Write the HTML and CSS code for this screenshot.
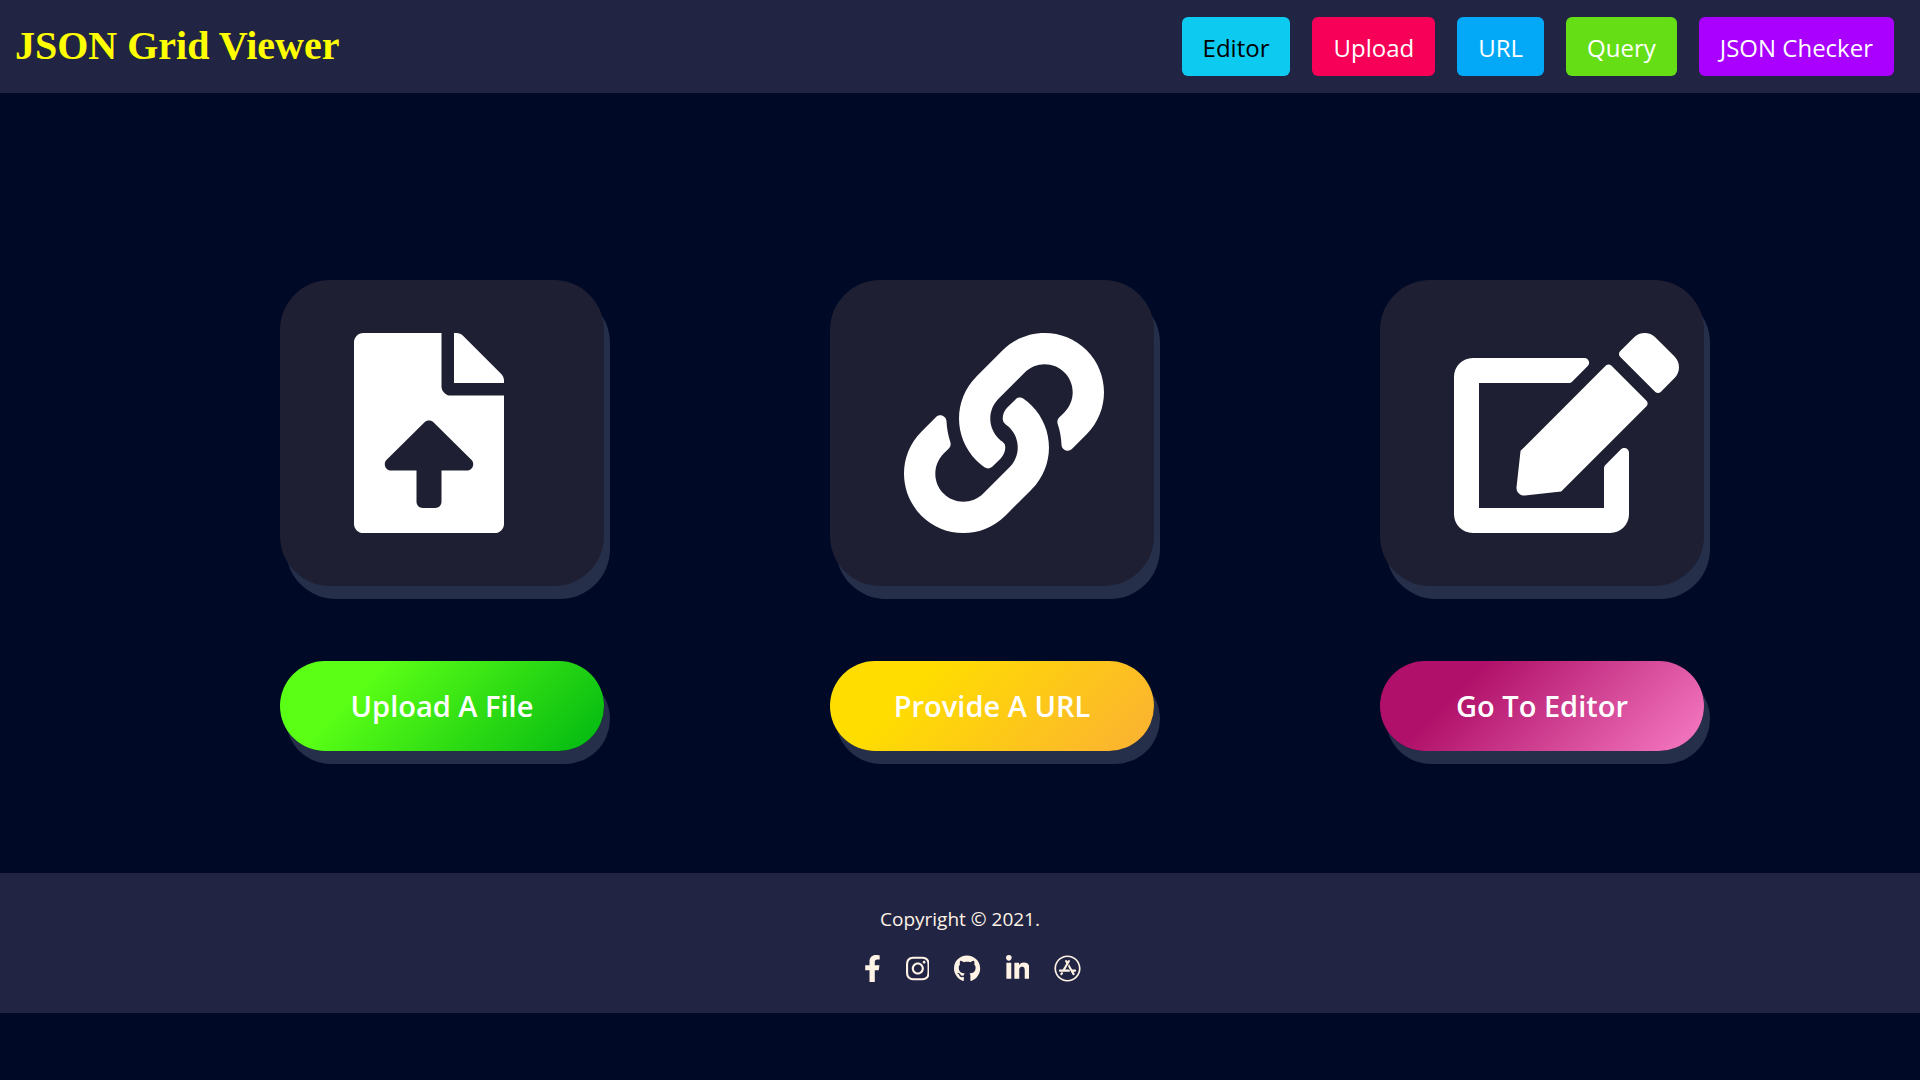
FILE: index.html
```html
<!DOCTYPE html>
<html lang="en">
<head>
  <meta charset="utf-8">
  <meta name="viewport" content="width=device-width, initial-scale=1">
  <title>JSON Grid Viewer</title>
  <link rel="stylesheet" href="styles.css">
</head>
<body>
  <header class="navbar">
    <h1 class="brand">JSON Grid Viewer</h1>
    <nav class="nav-buttons">
      <button class="nav-btn nav-editor" type="button">Editor</button>
      <button class="nav-btn nav-upload" type="button">Upload</button>
      <button class="nav-btn nav-url" type="button">URL</button>
      <button class="nav-btn nav-query" type="button">Query</button>
      <button class="nav-btn nav-checker" type="button">JSON Checker</button>
    </nav>
  </header>

  <main class="options">
    <section class="option">
      <div class="tile">
        <svg class="tile-icon" viewBox="0 0 384 512" aria-hidden="true"><path d="M224 136V0H24C10.7 0 0 10.7 0 24v464c0 13.3 10.7 24 24 24h336c13.3 0 24-10.7 24-24V160H248c-13.2 0-24-10.8-24-24zm65.18 216.01H224v80c0 8.84-7.16 16-16 16h-32c-8.84 0-16-7.16-16-16v-80H94.82c-14.28 0-21.41-17.29-11.27-27.36l96.42-95.7c6.65-6.61 17.39-6.61 24.04 0l96.42 95.7c10.15 10.07 3.03 27.36-11.25 27.36zM377 105L279.1 7c-4.5-4.5-10.6-7-17-7H256v128h128v-6.1c0-6.3-2.5-12.4-7-16.9z"/></svg>
      </div>
      <button class="action action-upload" type="button">Upload A File</button>
    </section>
    <section class="option">
      <div class="tile">
        <svg class="tile-icon" viewBox="0 0 512 512" aria-hidden="true"><path d="M326.612 185.391c59.747 59.809 58.927 155.698.36 214.59-.11.12-.24.25-.36.37l-67.2 67.2c-59.27 59.27-155.699 59.262-214.96 0-59.27-59.26-59.27-155.7 0-214.96l37.106-37.106c9.84-9.84 26.786-3.3 27.294 10.606.648 17.722 3.826 35.527 9.69 52.721 1.986 5.822.567 12.262-3.783 16.612l-13.087 13.087c-28.026 28.026-28.905 73.66-1.155 101.96 28.024 28.579 74.086 28.749 102.325.51l67.2-67.19c28.191-28.191 28.073-73.757 0-101.83-3.701-3.694-7.429-6.564-10.341-8.569a16.037 16.037 0 0 1-6.947-12.606c-.396-10.567 3.348-21.456 11.698-29.806l21.054-21.055c5.521-5.521 14.182-6.199 20.584-1.731a152.482 152.482 0 0 1 20.522 17.197zM467.547 44.449c-59.261-59.262-155.69-59.27-214.96 0l-67.2 67.2c-.12.12-.25.25-.36.37-58.566 58.892-59.387 154.781.36 214.59a152.454 152.454 0 0 0 20.521 17.196c6.402 4.468 15.064 3.789 20.584-1.731l21.054-21.055c8.35-8.35 12.094-19.239 11.698-29.806a16.037 16.037 0 0 0-6.947-12.606c-2.912-2.005-6.64-4.875-10.341-8.569-28.073-28.073-28.191-73.639 0-101.83l67.2-67.19c28.239-28.239 74.3-28.069 102.325.51 27.75 28.3 26.872 73.934-1.155 101.96l-13.087 13.087c-4.35 4.35-5.769 10.79-3.783 16.612 5.864 17.194 9.042 34.999 9.69 52.721.509 13.906 17.454 20.446 27.294 10.606l37.106-37.106c59.271-59.259 59.271-155.699.001-214.959z"/></svg>
      </div>
      <button class="action action-url" type="button">Provide A URL</button>
    </section>
    <section class="option">
      <div class="tile">
        <svg class="tile-icon" viewBox="0 0 576 512" aria-hidden="true"><path d="M402.6 83.2l90.2 90.2c3.8 3.8 3.8 10 0 13.8L274.4 405.6l-92.8 10.3c-12.4 1.4-22.9-9.1-21.5-21.5l10.3-92.8L388.8 83.2c3.8-3.8 10-3.8 13.8 0zm162-22.9l-48.8-48.8c-15.2-15.2-39.9-15.2-55.2 0l-35.4 35.4c-3.8 3.8-3.8 10 0 13.8l90.2 90.2c3.8 3.8 10 3.8 13.8 0l35.4-35.4c15.2-15.3 15.2-40 0-55.2zM384 346.2V448H64V128h229.8c3.2 0 6.2-1.3 8.5-3.5l40-40c7.6-7.6 2.2-20.5-8.5-20.5H48C21.5 64 0 85.5 0 112v352c0 26.5 21.5 48 48 48h352c26.5 0 48-21.5 48-48V306.2c0-10.7-12.9-16-20.5-8.5l-40 40c-2.2 2.3-3.5 5.3-3.5 8.5z"/></svg>
      </div>
      <button class="action action-editor" type="button">Go To Editor</button>
    </section>
  </main>

  <footer class="footer">
    <p class="copyright">Copyright © 2021.</p>
    <div class="social">
      <a href="#" aria-label="Facebook"><svg class="social-icon" viewBox="0 0 320 512"><path d="M279.14 288l14.22-92.66h-88.91v-60.13c0-25.35 12.42-50.06 52.24-50.06h40.42V6.26S260.43 0 225.36 0c-73.22 0-121.08 44.38-121.08 124.72v70.62H22.89V288h81.39v224h100.17V288z"/></svg></a>
      <a href="#" aria-label="Instagram"><svg class="social-icon" viewBox="0 0 448 512"><path d="M224.1 141c-63.6 0-114.9 51.3-114.9 114.9s51.3 114.9 114.9 114.9S339 319.5 339 255.9 287.7 141 224.1 141zm0 189.6c-41.1 0-74.7-33.5-74.7-74.7s33.5-74.7 74.7-74.7 74.7 33.5 74.7 74.7-33.6 74.7-74.7 74.7zm146.4-194.3c0 14.9-12 26.8-26.8 26.8-14.9 0-26.8-12-26.8-26.8s12-26.8 26.8-26.8 26.8 12 26.8 26.8zm76.1 27.2c-1.7-35.9-9.9-67.7-36.2-93.9-26.2-26.2-58-34.4-93.9-36.2-37-2.1-147.9-2.1-184.9 0-35.8 1.7-67.6 9.9-93.9 36.1s-34.4 58-36.2 93.9c-2.1 37-2.1 147.9 0 184.9 1.7 35.9 9.9 67.7 36.2 93.9s58 34.4 93.9 36.2c37 2.1 147.9 2.1 184.9 0 35.9-1.7 67.7-9.9 93.9-36.2 26.2-26.2 34.4-58 36.2-93.9 2.1-37 2.1-147.8 0-184.8zM398.8 388c-7.8 19.6-22.9 34.7-42.6 42.6-29.5 11.7-99.5 9-132.1 9s-102.7 2.6-132.1-9c-19.6-7.8-34.7-22.9-42.6-42.6-11.7-29.5-9-99.5-9-132.1s-2.6-102.7 9-132.1c7.8-19.6 22.9-34.7 42.6-42.6 29.5-11.7 99.5-9 132.1-9s102.7-2.6 132.1 9c19.6 7.8 34.7 22.9 42.6 42.6 11.7 29.5 9 99.5 9 132.1s2.7 102.7-9 132.1z"/></svg></a>
      <a href="#" aria-label="GitHub"><svg class="social-icon" viewBox="0 0 496 512"><path d="M165.9 397.4c0 2-2.3 3.6-5.2 3.6-3.3.3-5.6-1.3-5.6-3.6 0-2 2.3-3.6 5.2-3.6 3-.3 5.6 1.3 5.6 3.6zm-31.1-4.5c-.7 2 1.3 4.3 4.3 4.9 2.6 1 5.6 0 6.2-2s-1.3-4.3-4.3-5.2c-2.6-.7-5.5.3-6.2 2.3zm44.2-1.7c-2.9.7-4.9 2.6-4.6 4.9.3 2 2.9 3.3 5.9 2.6 2.9-.7 4.9-2.6 4.6-4.6-.3-1.9-3-3.2-5.9-2.9zM244.8 8C106.1 8 0 113.3 0 252c0 110.9 69.8 205.8 169.5 239.2 12.8 2.3 17.3-5.6 17.3-12.1 0-6.2-.3-40.4-.3-61.4 0 0-70 15-84.7-29.8 0 0-11.4-29.1-27.8-36.6 0 0-22.9-15.7 1.6-15.4 0 0 24.9 2 38.6 25.8 21.9 38.6 58.6 27.5 72.9 20.9 2.3-16 8.8-27.1 16-33.7-55.9-6.2-112.3-14.3-112.3-110.5 0-27.5 7.6-41.3 23.6-58.9-2.6-6.5-11.1-33.3 2.6-67.9 20.9-6.5 69 27 69 27 20-5.6 41.5-8.5 62.8-8.5s42.8 2.9 62.8 8.5c0 0 48.1-33.6 69-27 13.7 34.7 5.2 61.4 2.6 67.9 16 17.7 25.8 31.5 25.8 58.9 0 96.5-58.9 104.2-114.8 110.5 9.2 7.9 17 22.9 17 46.4 0 33.7-.3 75.4-.3 83.6 0 6.5 4.6 14.4 17.3 12.1C428.2 457.8 496 362.9 496 252 496 113.3 383.5 8 244.8 8z"/></svg></a>
      <a href="#" aria-label="LinkedIn"><svg class="social-icon" viewBox="0 0 448 512"><path d="M100.28 448H7.4V148.9h92.88zM53.79 108.1C24.09 108.1 0 83.5 0 53.8a53.79 53.79 0 0 1 107.58 0c0 29.7-24.1 54.3-53.79 54.3zM447.9 448h-92.68V302.4c0-34.7-.7-79.2-48.29-79.2-48.29 0-55.69 37.7-55.69 76.7V448h-92.78V148.9h89.08v40.8h1.3c12.4-23.5 42.69-48.3 87.88-48.3 94 0 111.28 61.9 111.28 142.3V448z"/></svg></a>
      <a href="#" aria-label="App Store"><svg class="social-icon" viewBox="0 0 512 512"><path d="M255.9 120.9l9.1-15.7c5.6-9.8 18.1-13.1 27.9-7.5 9.8 5.6 13.1 18.1 7.5 27.9l-87.5 151.5h63.3c20.5 0 32 24.1 23.1 40.8H113.8c-11.3 0-20.4-9.1-20.4-20.4 0-11.3 9.1-20.4 20.4-20.4h52l66.6-115.4-20.8-36.1c-5.6-9.8-2.3-22.2 7.5-27.9 9.8-5.6 22.2-2.3 27.9 7.5l8.9 15.7zm-78.7 218l-19.6 34c-5.6 9.8-18.1 13.1-27.9 7.5-9.8-5.6-13.1-18.1-7.5-27.9l14.6-25.2c16.4-5.1 29.8-1.2 40.4 11.6zm168.9-61.7h53.1c11.3 0 20.4 9.1 20.4 20.4 0 11.3-9.1 20.4-20.4 20.4h-29.5l19.9 34.5c5.6 9.8 2.3 22.2-7.5 27.9-9.8 5.6-22.2 2.3-27.9-7.5-33.5-58.1-58.7-101.6-75.4-130.6-17.1-29.5-4.9-59.1 7.2-69.1 13.4 23 33.4 57.7 60.1 104zM256 8C119 8 8 119 8 256s111 248 248 248 248-111 248-248S393 8 256 8zm216 248c0 118.7-96.1 216-216 216-118.7 0-216-96.1-216-216 0-118.7 96.1-216 216-216 118.7 0 216 96.1 216 216z"/></svg></a>
    </div>
  </footer>
</body>
</html>
```
FILE: styles.css
```css
* {
  box-sizing: border-box;
}

body {
  margin: 0;
  background: #000a27;
  color: #fff;
  font-family: "Open Sans", "Noto Sans", sans-serif;
}

button {
  border: 0;
  margin: 0;
  color: inherit;
  font-family: inherit;
  cursor: pointer;
}

.navbar {
  display: flex;
  justify-content: space-between;
  align-items: center;
  flex-wrap: wrap;
  gap: 16px;
  padding: 17px 26px 17px 15px;
  background: #212442;
}

.brand {
  margin: 0;
  padding-bottom: 2px;
  color: #ffff00;
  font: bold 40px/57px "Liberation Serif", serif;
}

.nav-buttons {
  display: flex;
  flex-wrap: wrap;
  gap: 22px;
}

.nav-btn {
  padding: 12px 21px 10px;
  border-radius: 6px;
  font-size: 24px;
  line-height: 37px;
}

.nav-editor {
  background: #0dcaf0;
  color: #000;
}

.nav-upload {
  background: #f70057;
}

.nav-url {
  background: #03a9f7;
}

.nav-query {
  background: #66de16;
}

.nav-checker {
  background: #a900ff;
}

.options {
  display: flex;
  flex-wrap: wrap;
  justify-content: center;
  gap: 80px 226px;
  padding: 187px 0 122px 64px;
}

.option {
  display: flex;
  flex-direction: column;
  gap: 75px;
  width: 324px;
}

.tile {
  padding: 53px 0 53px 74px;
  border-radius: 50px;
  background: #1e1f33;
  box-shadow: 6px 13px #262f49;
}

.tile-icon {
  display: block;
  height: 200px;
  fill: #fff;
}

.action {
  padding: 24px 0;
  border-radius: 45px;
  box-shadow: 6px 13px #262f49;
  font-size: 29px;
  font-weight: 600;
  line-height: 42px;
}

.action-upload {
  background: linear-gradient(135deg, #5aff15 26%, #00b712 100%);
}

.action-url {
  background: linear-gradient(135deg, #ffdd00 26%, #fbb034 100%);
}

.action-editor {
  background: linear-gradient(135deg, #b01069 26%, #f77cc4 100%);
}

.footer {
  display: flex;
  flex-direction: column;
  align-items: center;
  gap: 20px;
  padding: 30px 0 31px;
  background: #212442;
  color: #fff3e6;
}

.copyright {
  margin: 0;
  font-size: 19px;
  line-height: 32px;
}

.social {
  display: flex;
  gap: 25px;
  padding-left: 25px;
}

.social-icon {
  display: block;
  height: 27px;
  fill: #fff3e6;
}
```
